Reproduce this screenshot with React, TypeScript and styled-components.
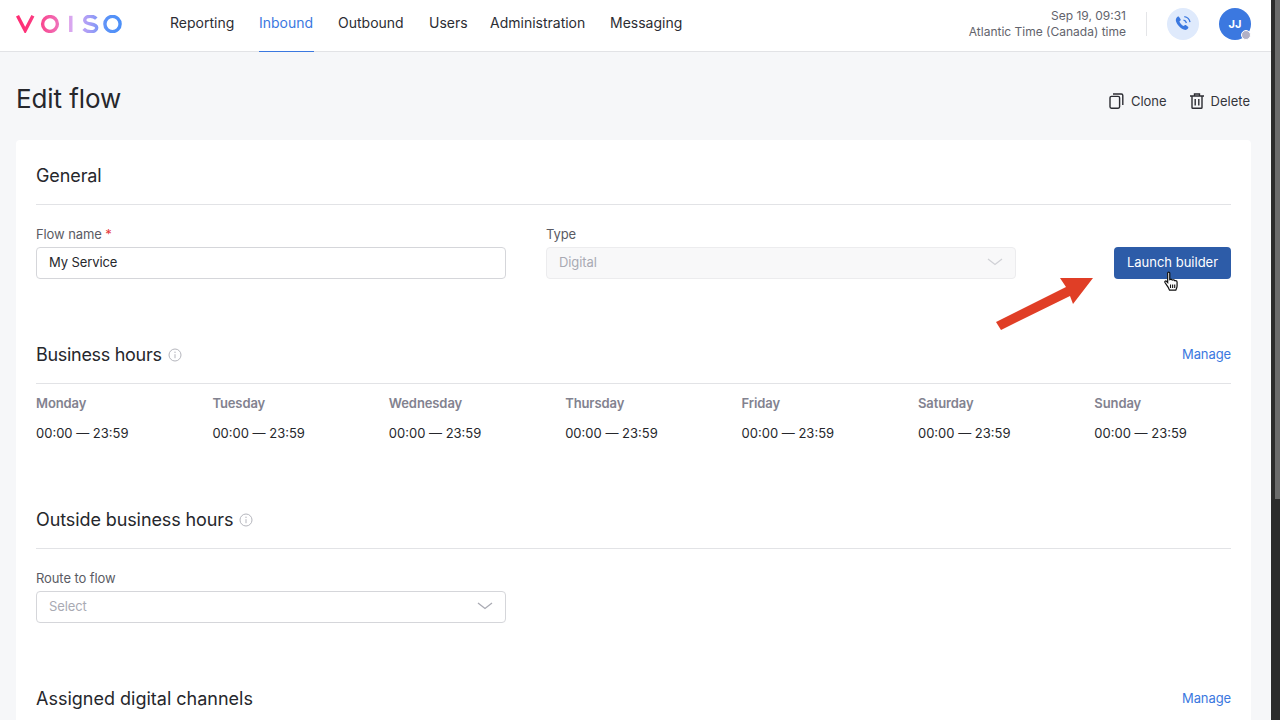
import React from "react";
import styled, { createGlobalStyle } from "styled-components";

const GlobalStyle = createGlobalStyle`
  html, body {
    margin: 0;
    padding: 0;
    height: 100%;
    overflow: hidden;
    background: #f6f7f9;
  }
  * {
    box-sizing: border-box;
  }
  body {
    font-family: Inter, "Liberation Sans", sans-serif;
    color: #26272c;
  }
`;

const Page = styled.div`
  display: flex;
  width: 1280px;
  height: 720px;
  overflow: hidden;
`;

const Main = styled.div`
  width: 1271px;
  flex: none;
  height: 720px;
  overflow: hidden;
  position: relative;
`;

const Scrollbar = styled.div`
  width: 9px;
  flex: none;
  height: 720px;
  background: #2c2c2c;
  display: flex;
  justify-content: flex-end;
  align-items: flex-start;
`;

const ScrollThumb = styled.div`
  width: 5px;
  height: 499px;
  background: #6b6b6b;
`;

const Header = styled.header`
  height: 52px;
  background: #fff;
  border-bottom: 1px solid #e2e3e6;
  display: flex;
  align-items: stretch;
  padding: 0 20px 0 16px;
`;

const Logo = styled.svg`
  flex: none;
  margin-top: 15px;
`;

const Nav = styled.nav`
  display: grid;
  grid-template-columns: 65px 55px 67px 37px 96px 70px;
  column-gap: 24px;
  margin-left: 48px;
`;

const NavItem = styled.a<{ $active?: boolean }>`
  display: flex;
  align-items: center;
  height: 52px;
  padding-bottom: 7px;
  font-size: 14px;
  white-space: nowrap;
  color: ${(p) => (p.$active ? "#3b78e0" : "#2c2d33")};
  border-bottom: 1px solid ${(p) => (p.$active ? "#3b78e0" : "transparent")};
`;

const HeaderRight = styled.div`
  margin-left: auto;
  display: flex;
  align-items: center;
  padding-bottom: 3px;
`;

const Clock = styled.div`
  text-align: right;
  font-size: 12px;
  line-height: 16px;
  color: #62636c;
`;

const Divider = styled.div`
  width: 1px;
  height: 24px;
  background: #e4e5e8;
  margin: 0 20px;
`;

const CallButton = styled.div`
  width: 32px;
  height: 32px;
  border-radius: 50%;
  background: #dfeafc;
  display: flex;
  align-items: center;
  justify-content: center;
`;

const Avatar = styled.div`
  position: relative;
  width: 32px;
  height: 32px;
  margin-left: 20px;
  border-radius: 50%;
  background: #3b78e0;
  color: #fff;
  font-size: 11px;
  font-weight: 700;
  display: flex;
  align-items: center;
  justify-content: center;
`;

const StatusDot = styled.span`
  position: absolute;
  right: 0;
  bottom: 0;
  width: 10px;
  height: 10px;
  border-radius: 50%;
  background: #b1b0c6;
  border: 1px solid #fff;
`;

const TitleRow = styled.div`
  display: flex;
  align-items: center;
  justify-content: space-between;
  height: 88px;
  padding: 4px 21px 0 16px;
`;

const Title = styled.h1`
  margin: 0;
  font-size: 26px;
  font-weight: 400;
  letter-spacing: -0.1px;
  color: #26272c;
`;

const Actions = styled.div`
  display: flex;
  gap: 23px;
  padding-top: 6px;
`;

const Action = styled.a`
  display: flex;
  align-items: center;
  gap: 7px;
  font-size: 13px;
  color: #34353b;
`;

const Card = styled.main`
  margin: 0 20px 0 16px;
  background: #fff;
  border-radius: 4px;
  padding: 20px 20px 0;
`;

const SectionHead = styled.div`
  display: flex;
  align-items: center;
  justify-content: space-between;
  height: 45px;
  padding-bottom: 12px;
  border-bottom: 1px solid #e2e3e6;
`;

const SectionTitle = styled.h2<{ $tracking?: number }>`
  display: flex;
  align-items: center;
  gap: 6px;
  margin: 0;
  font-size: 18px;
  line-height: 30px;
  font-weight: 400;
  letter-spacing: ${(p) => p.$tracking ?? -0.1}px;
  color: #26272c;
`;

const ManageLink = styled.a`
  padding-bottom: 2px;
  font-size: 13px;
  letter-spacing: -0.1px;
  color: #3b78e0;
`;

const FieldsRow = styled.div`
  display: flex;
  align-items: flex-end;
  margin-top: 20px;
`;

const Field = styled.div`
  width: 470px;
  margin-right: 40px;
`;

const Label = styled.div`
  font-size: 13px;
  line-height: 18px;
  margin-bottom: 4px;
  letter-spacing: -0.1px;
  color: #5a5b64;
`;

const Required = styled.span`
  color: #e5383b;
`;

const Input = styled.div<{ $state?: "disabled" | "placeholder" }>`
  height: 32px;
  display: flex;
  align-items: center;
  justify-content: space-between;
  padding: 0 12px 2px;
  font-size: 13px;
  letter-spacing: -0.1px;
  border-radius: 4px;
  border: 1px solid ${(p) => (p.$state === "disabled" ? "#ececee" : "#d5d6da")};
  background: ${(p) => (p.$state === "disabled" ? "#f8f8f9" : "#fff")};
  color: ${(p) => (p.$state ? "#a9aab3" : "#26272c")};
`;

const LaunchButton = styled.button`
  position: relative;
  width: 117px;
  height: 32px;
  margin-left: auto;
  padding: 0 0 2px;
  border: none;
  border-radius: 4px;
  background: #2d5ca8;
  color: #fff;
  font-family: inherit;
  font-size: 13px;
`;

const PointerWrap = styled.span`
  position: absolute;
  left: 49px;
  top: 24px;
  line-height: 0;
`;

const Arrow = styled.svg`
  position: absolute;
  left: 994px;
  top: 274px;
`;

const HoursSection = styled.section`
  margin-top: 60px;
`;

const HoursGrid = styled.div`
  display: grid;
  grid-template-columns: repeat(7, 176.4px);
  margin-top: 10px;
`;

const Day = styled.div`
  font-size: 13px;
  line-height: 18px;
  font-weight: 600;
  letter-spacing: -0.1px;
  color: #82828f;
`;

const Hours = styled.div`
  font-size: 13px;
  line-height: 18px;
  margin-top: 12px;
  color: #26272c;
`;

const OutsideSection = styled.section`
  margin-top: 62px;
`;

const RouteField = styled(Field)`
  margin-top: 20px;
`;

const ChannelsSection = styled.section`
  margin-top: 60px;
`;

const VoisoLogo = () => (
  <Logo width="106" height="18" viewBox="0 0 106 18" fill="none" role="img" aria-label="Voiso">
    <defs>
      <linearGradient id="voisoGrad" gradientUnits="userSpaceOnUse" x1="0" y1="0" x2="106" y2="0">
        <stop offset="0" stopColor="#ff2b72" />
        <stop offset="0.2" stopColor="#fb3d84" />
        <stop offset="0.38" stopColor="#f16bb4" />
        <stop offset="0.52" stopColor="#d9a8f0" />
        <stop offset="0.68" stopColor="#ab9ef6" />
        <stop offset="0.85" stopColor="#5c93f8" />
        <stop offset="1" stopColor="#4a8ff8" />
      </linearGradient>
    </defs>
    <g stroke="url(#voisoGrad)" strokeWidth="3.4">
      <path d="M1.5 .8L9.2 15.5 16.9 .8" />
      <circle cx="34" cy="9" r="7.4" />
      <path d="M54.8 .8V17" />
      <path d="M80.3 3.7C78.7 2 76.7 1.2 74.3 1.2 71 1.2 68.7 3 68.7 5.2 68.7 10.5 80.7 7.5 80.7 12.8 80.7 15 78.2 16.8 74.7 16.8 71.9 16.8 69.4 15.8 67.6 13.9" />
      <circle cx="96.5" cy="9" r="7.6" />
    </g>
  </Logo>
);

const Chevron = ({ color }: { color: string }) => (
  <svg width="16" height="8" viewBox="0 0 16 8" fill="none">
    <path d="M1 1l7 5.5L15 1" stroke={color} strokeWidth="1.3" />
  </svg>
);

const InfoIcon = () => (
  <svg width="14" height="14" viewBox="0 0 14 14" fill="none">
    <circle cx="7" cy="7" r="6" stroke="#b5b6bd" strokeWidth="1" />
    <path d="M7 6.2v4" stroke="#b5b6bd" strokeWidth="1" />
    <circle cx="7" cy="4.2" r=".7" fill="#b5b6bd" />
  </svg>
);

const CloneIcon = () => (
  <svg width="15" height="16" viewBox="0 0 15 16" fill="none" stroke="#2c2d33" strokeWidth="1.4">
    <rect x="1" y="3.4" width="9.6" height="11.8" rx="1.4" />
    <path d="M4 1h8.4a1.4 1.4 0 0 1 1.4 1.4V12" />
  </svg>
);

const TrashIcon = () => (
  <svg width="14" height="16" viewBox="0 0 14 16" fill="none" stroke="#2c2d33" strokeWidth="1.4">
    <path d="M0 3h14M4.5 3V1h5v2M2 3v11.4c0 .5.4.9.9.9h8.2c.5 0 .9-.4.9-.9V3M5.2 6v6.5M8.8 6v6.5" />
  </svg>
);

const PhoneIcon = () => (
  <svg width="18" height="18" viewBox="0 0 18 18" fill="none">
    <path
      d="M3.6 1.8c.5-.4 1.1-.3 1.5.2l1.5 2.2c.3.5.2 1-.2 1.4l-1 .9c.5 1.5 2.3 3.6 4.2 4.6l1.1-.9c.4-.3 1-.4 1.4 0l1.900 1.600c.5.4.5 1 .1 1.500-1 1.300-2.300 2-3.600 1.500C6.600 13.600 2.800 9.400 1.900 6 1.500 4.300 2.400 2.800 3.600 1.800z"
      fill="#3b78e0"
    />
    <path d="M9.5 5.2c1.400.2 2.600 1.300 2.900 2.800M10.300 1.600c2.900.4 5.200 2.700 5.700 5.600" stroke="#3b78e0" strokeWidth="1.3" />
  </svg>
);

const HandCursor = () => (
  <svg width="18" height="21" viewBox="0 0 14 17">
    <path
      d="M3.5 1.7c0-1 1.700-1 1.700 0v5.300l.6-.2c.6-.2 1.300 0 1.400.5l.7-.1c.6-.1 1.100.2 1.200.6l.7 0c.8 0 1.300.5 1.300 1.200v3.200c0 1.400-.6 2.200-1 3.300H5l-1.200-2.500L1.300 9.300c-.5-.8.5-1.600 1.200-1l1 1z"
      fill="#fff"
      stroke="#111"
      strokeWidth="1"
    />
    <path d="M5.800 11v2.800M7.500 11v2.800M9.200 11v2.800" stroke="#111" strokeWidth=".9" />
  </svg>
);

const days = ["Monday", "Tuesday", "Wednesday", "Thursday", "Friday", "Saturday", "Sunday"];
const navItems = ["Reporting", "Inbound", "Outbound", "Users", "Administration", "Messaging"];

export default function App() {
  return (
    <Page>
      <GlobalStyle />
      <Main>
        <Header>
          <VoisoLogo />
          <Nav>
            {navItems.map((item) => (
              <NavItem key={item} $active={item === "Inbound"}>
                {item}
              </NavItem>
            ))}
          </Nav>
          <HeaderRight>
            <Clock>
              Sep 19, 09:31
              <br />
              Atlantic Time (Canada) time
            </Clock>
            <Divider />
            <CallButton>
              <PhoneIcon />
            </CallButton>
            <Avatar>
              JJ
              <StatusDot />
            </Avatar>
          </HeaderRight>
        </Header>
        <TitleRow>
          <Title>Edit flow</Title>
          <Actions>
            <Action>
              <CloneIcon />
              Clone
            </Action>
            <Action>
              <TrashIcon />
              Delete
            </Action>
          </Actions>
        </TitleRow>
        <Card>
          <SectionHead>
            <SectionTitle>General</SectionTitle>
          </SectionHead>
          <FieldsRow>
            <Field>
              <Label>
                Flow name <Required>*</Required>
              </Label>
              <Input>My Service</Input>
            </Field>
            <Field>
              <Label>Type</Label>
              <Input $state="disabled">
                Digital
                <Chevron color="#d0d1d6" />
              </Input>
            </Field>
            <LaunchButton>
              Launch builder
              <PointerWrap>
                <HandCursor />
              </PointerWrap>
            </LaunchButton>
          </FieldsRow>
          <HoursSection>
            <SectionHead>
              <SectionTitle $tracking={-0.3}>
                Business hours <InfoIcon />
              </SectionTitle>
              <ManageLink>Manage</ManageLink>
            </SectionHead>
            <HoursGrid>
              {days.map((day) => (
                <div key={day}>
                  <Day>{day}</Day>
                  <Hours>00:00 — 23:59</Hours>
                </div>
              ))}
            </HoursGrid>
          </HoursSection>
          <OutsideSection>
            <SectionHead>
              <SectionTitle>
                Outside business hours <InfoIcon />
              </SectionTitle>
            </SectionHead>
            <RouteField>
              <Label>Route to flow</Label>
              <Input $state="placeholder">
                Select
                <Chevron color="#a9aab3" />
              </Input>
            </RouteField>
          </OutsideSection>
          <ChannelsSection>
            <SectionHead>
              <SectionTitle $tracking={0}>Assigned digital channels</SectionTitle>
              <ManageLink>Manage</ManageLink>
            </SectionHead>
          </ChannelsSection>
        </Card>
        <Arrow width="100" height="60" viewBox="0 0 100 60">
          <path d="M2 48L72 13 66 4H99L79 30 76 22 7 56z" fill="#e03e26" />
        </Arrow>
      </Main>
      <Scrollbar>
        <ScrollThumb />
      </Scrollbar>
    </Page>
  );
}
